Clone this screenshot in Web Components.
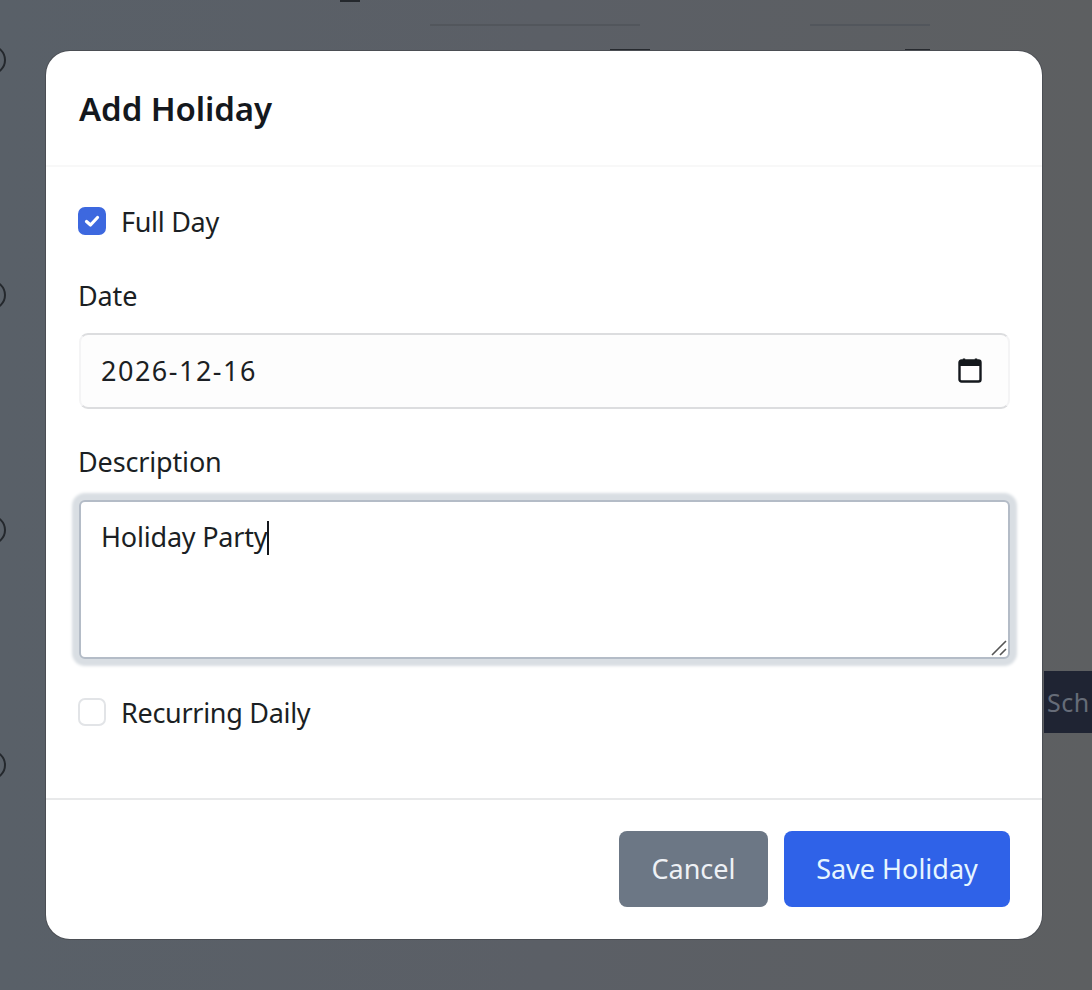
<!DOCTYPE html>
<html>
<head>
<meta charset="utf-8">
<title>Add Holiday</title>
<style>
  html, body { margin: 0; height: 100%; }
  body { font-family: "Noto Sans", Roboto, sans-serif; color: #14181d; overflow: hidden; }
</style>
</head>
<body>
<page-backdrop></page-backdrop>
<holiday-modal heading="Add Holiday">
  <check-field checked>Full Day</check-field>
  <date-field label="Date" value="2026-12-16"></date-field>
  <text-field label="Description" value="Holiday Party"></text-field>
  <check-field style="margin-top:39px">Recurring Daily</check-field>
  <modal-button slot="footer" kind="secondary">Cancel</modal-button>
  <modal-button slot="footer" kind="primary">Save Holiday</modal-button>
</holiday-modal>

<script>
// dimmed page behind the modal
class PageBackdrop extends HTMLElement {
  constructor() {
    super();
    const shadow = this.attachShadow({ mode: "open" });
    shadow.innerHTML = `
      <style>
        :host { display: block; position: fixed; inset: 0; overflow: hidden;
          background: linear-gradient(90deg, #596068 0%, #5b5f66 50%, #5d5f61 100%); }
        .dots { display: flex; flex-direction: column; gap: 205px; padding-top: 45px; margin-left: -24px; }
        .dot { width: 30px; height: 30px; box-sizing: border-box; border: 2px solid #24282d; border-radius: 50%; }
        .tops { display: flex; position: absolute; top: 24px; left: 430px; gap: 170px; }
        .tops i { display: block; height: 2px; background: #52565c; }
        .peek { position: absolute; top: 671px; right: 0; width: 48px; height: 62px; box-sizing: border-box;
          background: #1f2433; color: #666c78; font: 25px/62px "Noto Sans", sans-serif; padding-left: 3px; white-space: nowrap; letter-spacing: 0.5px; }
        .mark { position: absolute; top: 0; left: 340px; width: 20px; height: 2px; background: #24282d; }
        .edge { position: absolute; top: 49px; height: 2px; background: #26292e; }
      </style>
      <div class="mark"></div>
      <div class="tops"><i style="width:210px"></i><i style="width:120px"></i></div>
      <div class="edge" style="left:610px;width:40px"></div>
      <div class="edge" style="left:905px;width:25px"></div>
      <div class="dots"><div class="dot"></div><div class="dot"></div><div class="dot"></div><div class="dot"></div></div>
      <div class="peek">Sch</div>`;
  }
}
customElements.define("page-backdrop", PageBackdrop);

const modalTemplate = document.createElement("template");
modalTemplate.innerHTML = `
  <style>
    :host { display: block; position: fixed; left: 46px; top: 51px; width: 996px; height: 888px;
      background: #fff; border-radius: 24px; overflow: hidden; box-shadow: 0 0 0 1px #4b4e54; }
    .box { display: flex; flex-direction: column; height: 100%; }
    header { height: 116px; box-sizing: border-box; padding: 0 33px; display: flex; align-items: center;
      border-bottom: 2px solid #f8f8f8; font-size: 33px; font-weight: 600; letter-spacing: -0.1px; color: #14181d; }
    .body { flex: 1; padding: 40px 32px 0 32px; display: flex; flex-direction: column; }
    footer { height: 141px; box-sizing: border-box; border-top: 2px solid #e8e9ea; padding: 31px 32px;
      display: flex; justify-content: flex-end; align-items: flex-start; gap: 16px; }
  </style>
  <div class="box">
    <header></header>
    <div class="body"><slot></slot></div>
    <footer><slot name="footer"></slot></footer>
  </div>`;

class HolidayModal extends HTMLElement {
  constructor() {
    super();
    const shadow = this.attachShadow({ mode: "open" });
    shadow.append(modalTemplate.content.cloneNode(true));
    shadow.querySelector("header").textContent = this.getAttribute("heading");
  }
}
customElements.define("holiday-modal", HolidayModal);

const checkTemplate = document.createElement("template");
checkTemplate.innerHTML = `
  <style>
    :host { display: flex; align-items: center; gap: 15px; height: 28px; font-size: 27px; letter-spacing: -0.3px; color: #1b1f24; }
    .box { width: 28px; height: 28px; box-sizing: border-box; border-radius: 7px; border: 2px solid #e2e4e7;
      background: #fff; display: flex; align-items: center; justify-content: center; }
    :host([checked]) .box { background: #3d68df; border-color: #3d68df; }
    svg { display: none; }
    :host([checked]) svg { display: block; }
  </style>
  <span class="box">
    <svg width="18" height="18" viewBox="0 0 18 18"><path d="M3.5 9.5 L7.5 13 L14.5 5.5" fill="none" stroke="#fff" stroke-width="3.2" stroke-linecap="round" stroke-linejoin="round"/></svg>
  </span>
  <span><slot></slot></span>`;

class CheckField extends HTMLElement {
  constructor() {
    super();
    this.attachShadow({ mode: "open" }).append(checkTemplate.content.cloneNode(true));
  }
}
customElements.define("check-field", CheckField);

const dateTemplate = document.createElement("template");
dateTemplate.innerHTML = `
  <style>
    :host { display: block; margin-top: 43px; }
    label { display: block; font-size: 27px; line-height: 36px; letter-spacing: -0.15px; color: #1b1f24; margin-bottom: 19px; }
    .input { height: 76px; box-sizing: border-box; border: 2px solid #f4f4f5; border-top-color: #dcdddf; border-bottom-color: #dcdddf; border-radius: 9px; margin: 0 0 0 1px;
      padding: 0 26px 2px 20px; display: flex; align-items: center; justify-content: space-between; font-size: 27px; color: #1b1f24; background: #fdfdfd; }
    .value { letter-spacing: 1.5px; }
    svg { display: block; }
  </style>
  <label></label>
  <div class="input">
    <span class="value"></span>
    <svg width="24" height="26" viewBox="0 0 24 26"><path d="M6 1.5v3M18 1.5v3" stroke="#14181d" stroke-width="2.4" fill="none"/><rect x="1.5" y="3.5" width="21" height="21" rx="2" fill="#fff" stroke="#14181d" stroke-width="2.4"/><rect x="1.5" y="3.5" width="21" height="5.5" fill="#14181d"/></svg>
  </div>`;

class DateField extends HTMLElement {
  constructor() {
    super();
    const shadow = this.attachShadow({ mode: "open" });
    shadow.append(dateTemplate.content.cloneNode(true));
    shadow.querySelector("label").textContent = this.getAttribute("label");
    shadow.querySelector(".value").textContent = this.getAttribute("value");
  }
}
customElements.define("date-field", DateField);

const textTemplate = document.createElement("template");
textTemplate.innerHTML = `
  <style>
    :host { display: block; margin-top: 35px; }
    label { display: block; font-size: 27px; line-height: 36px; letter-spacing: -0.15px; color: #1b1f24; margin-bottom: 20px; }
    .input { position: relative; height: 159px; box-sizing: border-box; margin-left: 1px; border: 2px solid #b4bcc7; border-radius: 6px;
      box-shadow: 0 0 3px 7px #d9dee3; padding: 15px 20px; font-size: 27px; line-height: 40px; letter-spacing: -0.2px; color: #1b1f24; background: #fff; }
    .caret { display: inline-block; width: 2px; height: 34px; background: #14181d; vertical-align: -8px; margin-left: 0; }
    svg { position: absolute; right: 0; bottom: 0; }
  </style>
  <label></label>
  <div class="input">
    <span class="value"></span><span class="caret"></span>
    <svg width="18" height="18" viewBox="0 0 18 18"><path d="M2 16 L16 2 M10 16 L16 10" stroke="#555" stroke-width="1.6" fill="none"/></svg>
  </div>`;

class TextField extends HTMLElement {
  constructor() {
    super();
    const shadow = this.attachShadow({ mode: "open" });
    shadow.append(textTemplate.content.cloneNode(true));
    shadow.querySelector("label").textContent = this.getAttribute("label");
    shadow.querySelector(".value").textContent = this.getAttribute("value");
  }
}
customElements.define("text-field", TextField);

const buttonTemplate = document.createElement("template");
buttonTemplate.innerHTML = `
  <style>
    :host { display: block; height: 76px; box-sizing: border-box; border-radius: 8px;
      font-size: 27px; line-height: 76px; color: #fff; text-align: center; }
    :host([kind="secondary"]) { background: #6c7785; width: 149px; color: #eef1f5; }
    :host([kind="primary"]) { background: #2f62e8; width: 226px; color: #e6f6ff; }
  </style>
  <slot></slot>`;

class ModalButton extends HTMLElement {
  constructor() {
    super();
    this.attachShadow({ mode: "open" }).append(buttonTemplate.content.cloneNode(true));
  }
}
customElements.define("modal-button", ModalButton);
</script>
</body>
</html>
